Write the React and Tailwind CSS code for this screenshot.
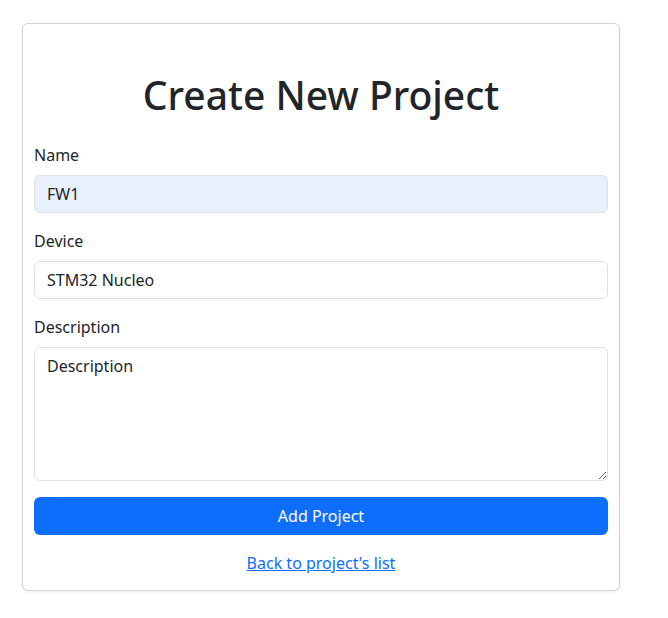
export default function App() {
  return (
    <div className="min-h-screen bg-white pt-[23px] pl-[22px] font-['Noto_Sans',sans-serif] text-[#212529]">
      <div className="w-[598px] rounded-md border border-[#d3d3d3] bg-white px-[11px] pt-[47px] pb-[15px] shadow-[0_1px_3px_rgba(0,0,0,0.08)]">
        <h1 className="mb-6 text-center text-[39px] leading-[48px] font-medium">Create New Project</h1>
        <form className="flex flex-col">
          <label className="mb-2 block text-base leading-6">Name</label>
          <input
            type="text"
            defaultValue="FW1"
            className="mb-4 h-[38px] w-full rounded-md border border-[#dee2e6] bg-[#e8f0fe] px-3 text-base text-[#212529] outline-none"
          />
          <label className="mb-2 block text-base leading-6">Device</label>
          <input
            type="text"
            defaultValue="STM32 Nucleo"
            className="mb-4 h-[38px] w-full rounded-md border border-[#dee2e6] bg-white px-3 text-base text-[#212529] outline-none"
          />
          <label className="mb-2 block text-base leading-6">Description</label>
          <textarea
            defaultValue="Description"
            className="mb-4 h-[134px] w-full rounded-md border border-[#dee2e6] bg-white px-3 py-[6px] text-base leading-6 text-[#212529] outline-none"
          />
          <button
            type="button"
            className="h-[38px] w-full rounded-md bg-[#0d6efd] text-base text-white"
          >
            Add Project
          </button>
          <div className="mt-4 text-center leading-6">
            <a href="#" className="text-[#0d6efd] underline">
              Back to project's list
            </a>
          </div>
        </form>
      </div>
    </div>
  );
}
